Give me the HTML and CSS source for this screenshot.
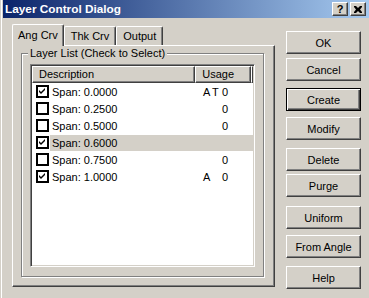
FILE: index.html
```html
<!DOCTYPE html>
<html lang="en">
<head>
    <meta charset="UTF-8">
    <title>Layer Control Dialog</title>
    <link rel="stylesheet" href="styles.css">
</head>
<body>
    <div class="window">
        <div class="titlebar">
            <span class="title">Layer Control Dialog</span>
            <div class="caption-buttons">
                <span class="caption-btn">?</span>
                <span class="caption-btn close">
                    <svg width="8" height="7" viewBox="0 0 8 7"><path d="M0 0h2l2 2 2-2h2v1l-2 2.5 2 2.5v1h-2l-2-2-2 2h-2v-1l2-2.5-2-2.5z" fill="#000"/></svg>
                </span>
            </div>
        </div>

        <div class="content">
            <div class="tabs">
                <div class="tab-strip">
                    <div class="tab active">Ang Crv</div>
                    <div class="tab">Thk Crv</div>
                    <div class="tab">Output</div>
                </div>
                <div class="tab-panel">
                    <div class="group">
                        <span class="group-label">Layer List (Check to Select)</span>
                        <div class="listview">
                            <div class="list-header">
                                <div class="col-head desc">Description</div>
                                <div class="col-head usage">Usage</div>
                                <div class="col-head filler"></div>
                            </div>
                            <div class="row">
                                <span class="check on"></span>
                                <span class="label">Span: 0.0000</span>
                                <span class="use"><i>A</i><i>T</i><i class="zero">0</i></span>
                            </div>
                            <div class="row">
                                <span class="check"></span>
                                <span class="label">Span: 0.2500</span>
                                <span class="use"><i></i><i></i><i class="zero">0</i></span>
                            </div>
                            <div class="row">
                                <span class="check"></span>
                                <span class="label">Span: 0.5000</span>
                                <span class="use"><i></i><i></i><i class="zero">0</i></span>
                            </div>
                            <div class="row selected">
                                <span class="check on"></span>
                                <span class="label">Span: 0.6000</span>
                            </div>
                            <div class="row">
                                <span class="check"></span>
                                <span class="label">Span: 0.7500</span>
                                <span class="use"><i></i><i></i><i class="zero">0</i></span>
                            </div>
                            <div class="row">
                                <span class="check on"></span>
                                <span class="label">Span: 1.0000</span>
                                <span class="use"><i>A</i><i></i><i class="zero">0</i></span>
                            </div>
                        </div>
                    </div>
                </div>
            </div>

            <div class="buttons">
                <button class="btn b-ok">OK</button>
                <button class="btn b-cancel">Cancel</button>
                <button class="btn default b-create">Create</button>
                <button class="btn b-modify">Modify</button>
                <button class="btn b-delete">Delete</button>
                <button class="btn b-purge">Purge</button>
                <button class="btn b-uniform">Uniform</button>
                <button class="btn b-angle">From Angle</button>
                <button class="btn b-help">Help</button>
            </div>
        </div>
    </div>
</body>
</html>
```

FILE: styles.css
```css
body {
    margin: 0;
    padding: 0;
    font-family: 'Liberation Sans', Arial, sans-serif;
    font-size: 11px;
    color: #000;
    background: #d4d0c8;
}

.window {
    width: 369px;
    height: 298px;
    box-sizing: border-box;
    background: #d4d0c8;
    border-left: 1px solid #d4d0c8;
    box-shadow: inset 1px 0 0 #fff;
    overflow: hidden;
}

/* title bar */
.titlebar {
    height: 18px;
    margin-left: 2px;
    padding-left: 2px;
    display: flex;
    align-items: center;
    justify-content: space-between;
    background: linear-gradient(to right, #0a246a, #a6caf0);
}

.title {
    color: #fff;
    font-weight: bold;
    font-size: 11.8px;
}

.caption-buttons {
    display: flex;
    margin-right: 3px;
}

.caption-btn {
    width: 16px;
    height: 14px;
    box-sizing: border-box;
    background: #d4d0c8;
    border-top: 1px solid #fff;
    border-left: 1px solid #fff;
    border-right: 1px solid #404040;
    border-bottom: 1px solid #404040;
    box-shadow: inset -1px -1px 0 #808080;
    display: flex;
    align-items: center;
    justify-content: center;
    font-weight: bold;
    font-size: 11px;
    line-height: 1;
}

.caption-btn.close {
    margin-left: 2px;
}

/* main area */
.content {
    display: flex;
    padding: 6px 0 0 11px;
}

.tabs {
    width: 263px;
}

.tab-strip {
    display: flex;
    height: 21px;
    align-items: flex-end;
}

.tab {
    height: 19px;
    box-sizing: border-box;
    padding: 3px 6px 0;
    white-space: nowrap;
    border-top: 1px solid #fff;
    border-left: 1px solid #fff;
    border-right: 1px solid #404040;
    box-shadow: inset -1px 0 0 #808080;
    border-radius: 2px 2px 0 0;
    position: relative;
}

.tab.active {
    height: 22px;
    margin-bottom: -1px;
    padding: 4px 5px 0;
    background: #d4d0c8;
    z-index: 1;
}

.tab-panel {
    height: 242px;
    box-sizing: border-box;
    border-top: 1px solid #fff;
    border-left: 1px solid #fff;
    border-right: 1px solid #404040;
    border-bottom: 1px solid #404040;
    box-shadow: inset -1px -1px 0 #808080;
    padding: 7px 0 0 8px;
}

/* group box */
.group {
    position: relative;
    width: 243px;
    height: 224px;
    box-sizing: border-box;
    border: 1px solid #808080;
    box-shadow: inset 1px 1px 0 #fff, 1px 1px 0 #fff;
    padding: 10px 8px 0 8px;
}

.group-label {
    position: absolute;
    top: -7px;
    left: 6px;
    padding: 0 2px;
    background: #d4d0c8;
    line-height: 13px;
}

/* list view */
.listview {
    width: 225px;
    height: 203px;
    box-sizing: border-box;
    background: #fff;
    border-top: 1px solid #808080;
    border-left: 1px solid #808080;
    border-right: 1px solid #fff;
    border-bottom: 1px solid #fff;
    box-shadow: inset 1px 1px 0 #404040, inset -1px -1px 0 #d4d0c8;
    padding: 1px;
}

.list-header {
    display: flex;
    height: 17px;
}

.col-head {
    box-sizing: border-box;
    height: 17px;
    line-height: 15px;
    padding-left: 6px;
    background: #d4d0c8;
    border-top: 1px solid #fff;
    border-left: 1px solid #fff;
    border-right: 1px solid #404040;
    border-bottom: 1px solid #404040;
    box-shadow: inset -1px -1px 0 #808080;
}

.col-head.desc {
    width: 164px;
}

.col-head.usage {
    width: 56px;
}

.col-head.filler {
    flex: 1;
    padding: 0;
}

.row {
    display: flex;
    align-items: center;
    height: 17px;
    padding-left: 4px;
}

.check {
    width: 13px;
    height: 13px;
    box-sizing: border-box;
    border: 2px solid #000;
    background: #fff center / 9px 9px no-repeat;
    flex: none;
}

.check.on {
    background-image: url("data:image/svg+xml,%3Csvg xmlns='http://www.w3.org/2000/svg' width='9' height='9' viewBox='0 0 9 9'%3E%3Cpath d='M1 3l2 2 4-4v2l-4 4-2-2z' fill='%23000'/%3E%3C/svg%3E");
}

.label {
    width: 146px;
    padding-left: 2px;
    margin-left: 1px;
    line-height: 16px;
}

.row.selected .label {
    flex: 1;
    background: #d4d0c8;
}

.use {
    display: flex;
    padding-left: 5px;
}

.use i {
    font-style: normal;
    width: 9px;
}

.use i.zero {
    margin-left: 1px;
}

/* buttons */
.buttons {
    display: flex;
    flex-direction: column;
    margin-left: 11px;
    padding-top: 7px;
}

.btn {
    width: 75px;
    height: 23px;
    box-sizing: border-box;
    font-family: 'Liberation Sans', Arial, sans-serif;
    font-size: 11px;
    color: #000;
    background: #d4d0c8;
    border-top: 1px solid #fff;
    border-left: 1px solid #fff;
    border-right: 1px solid #404040;
    border-bottom: 1px solid #404040;
    box-shadow: inset -1px -1px 0 #808080;
    border-radius: 0;
    padding: 0;
}

.btn.default {
    border: 1px solid #000;
    box-shadow: inset 1px 1px 0 #fff, inset -1px -1px 0 #404040, inset -2px -2px 0 #808080;
}

.b-cancel { margin-top: 4px; }
.b-create { margin-top: 7px; }
.b-modify { margin-top: 6px; }
.b-delete { margin-top: 8px; }
.b-purge { margin-top: 3px; }
.b-uniform { margin-top: 9px; }
.b-angle { margin-top: 6px; }
.b-help { margin-top: 8px; }
```
